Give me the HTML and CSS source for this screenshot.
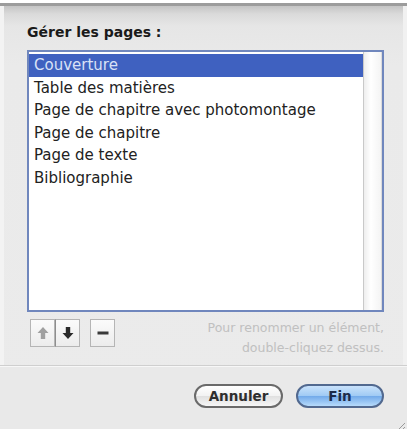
FILE: index.html
```html
<!DOCTYPE html>
<html lang="fr">
<head>
<meta charset="utf-8">
<title>Gérer les pages</title>
<link rel="stylesheet" href="styles.css">
</head>
<body>
<div class="window">
  <div class="sheet">
    <div class="content">
      <div class="title">Gérer les pages :</div>
      <div class="listbox">
        <ul class="rows">
          <li class="row selected">Couverture</li>
          <li class="row">Table des matières</li>
          <li class="row">Page de chapitre avec photomontage</li>
          <li class="row">Page de chapitre</li>
          <li class="row">Page de texte</li>
          <li class="row">Bibliographie</li>
        </ul>
        <div class="scrollbar"></div>
      </div>
      <div class="controls">
        <div class="tools">
          <div class="seg">
            <span class="tool disabled"><svg width="12" height="14" viewBox="0 0 12 14"><path d="M6 1 L11.5 7 L8.2 7 L8.2 13 L3.8 13 L3.8 7 L0.5 7 Z" fill="#a0a0a0"/></svg></span>
            <span class="tool"><svg width="12" height="14" viewBox="0 0 12 14"><path d="M6 13 L11.5 7 L8.2 7 L8.2 1 L3.8 1 L3.8 7 L0.5 7 Z" fill="#2a2a2a"/></svg></span>
          </div>
          <span class="tool single"><svg width="12" height="4" viewBox="0 0 12 4"><rect x="0.5" y="0.5" width="11" height="3" fill="#3a3a3a"/></svg></span>
        </div>
        <div class="hint">Pour renommer un élément,<br>double-cliquez dessus.</div>
      </div>
    </div>
    <div class="footer">
      <button class="btn cancel">Annuler</button>
      <button class="btn primary">Fin</button>
    </div>
    <div class="grip"><svg width="12" height="12" viewBox="0 0 12 12"><path d="M11 3 L3 11 M11 7 L7 11" stroke="#9a9a9a" stroke-width="1"/></svg></div>
  </div>
</div>
</body>
</html>
```

FILE: styles.css
```css
html, body {
  margin: 0;
  padding: 0;
  background: #ffffff;
}

.window {
  width: 407px;
  height: 429px;
  padding-top: 3px;
  box-sizing: border-box;
  font-family: "DejaVu Sans", "Verdana", sans-serif;
}

.sheet {
  position: relative;
  height: 426px;
  box-sizing: border-box;
  border-top: 3px solid #9c9c9c;
  background: linear-gradient(#c4c4c4 0px, #dadada 8px, #e6e6e6 20px, #eaeaea 60px, #ebebeb 100%);
  box-shadow: inset 4px 0 0 #f3f3f3, inset -4px 0 0 #f1f1f1;
  display: flex;
  flex-direction: column;
}

.content {
  padding: 18px 23px 0 27px;
  border-bottom: 1px solid #cfcfcf;
  height: 360px;
  box-sizing: border-box;
}

.title {
  font-size: 14px;
  font-weight: bold;
  line-height: 17px;
  color: #1a1a1a;
  margin-bottom: 9px;
}

.listbox {
  height: 262px;
  box-sizing: border-box;
  border: 2px solid #7087bd;
  background: #ffffff;
  display: flex;
}

.rows {
  list-style: none;
  margin: 2px 0 0 0;
  padding: 0;
  flex: 1;
}

.row {
  height: 22.5px;
  line-height: 23px;
  padding-left: 5px;
  font-size: 15px;
  color: #222222;
  white-space: nowrap;
}

.row.selected {
  background: #3f61c0;
  color: #d9e2f6;
}

.scrollbar {
  width: 17px;
  border-left: 1px solid #c9c9c9;
  border-right: 1px solid #dcdcdc;
  background: linear-gradient(90deg, #eeeeee, #ffffff 40%, #f4f4f4);
}

.controls {
  display: flex;
  justify-content: space-between;
  align-items: flex-start;
  margin-top: 7px;
}

.tools {
  display: flex;
  gap: 10px;
  margin-left: 3px;
}

.seg {
  display: flex;
}

.tool {
  width: 25px;
  height: 28px;
  box-sizing: border-box;
  border: 1px solid #b5b5b5;
  background: linear-gradient(#fbfbfb, #ececec);
  display: flex;
  align-items: center;
  justify-content: center;
}

.seg .tool + .tool {
  border-left: 1px solid #8e8e8e;
}

.hint {
  font-size: 12.5px;
  line-height: 20px;
  color: #c0c0c0;
  text-align: right;
  margin-top: -1px;
}

.footer {
  flex: 1;
  display: flex;
  justify-content: flex-end;
  align-items: flex-start;
  gap: 13px;
  padding: 17px 23px 0 0;
  border-top: 1px solid #f7f7f7;
  background: #e9e9e9;
}

.btn {
  height: 24px;
  border-radius: 12px;
  font-family: "DejaVu Sans", "Verdana", sans-serif;
  font-size: 13.5px;
  font-weight: bold;
  padding: 0;
  box-sizing: border-box;
}

.btn.cancel {
  width: 89px;
  border: 2px solid #6a6a6a;
  color: #2e2e2e;
  background: linear-gradient(#ffffff, #f2f2f2 50%, #e0e0e0 51%, #f6f6f6);
}

.btn.primary {
  width: 88px;
  border: 2px solid #52698f;
  color: #1d2c4a;
  background: linear-gradient(#c9e2fb, #9fcaf4 50%, #72aaea 51%, #b7dbfb);
}

.grip {
  position: absolute;
  right: 1px;
  bottom: 0;
  width: 12px;
  height: 12px;
}
```
